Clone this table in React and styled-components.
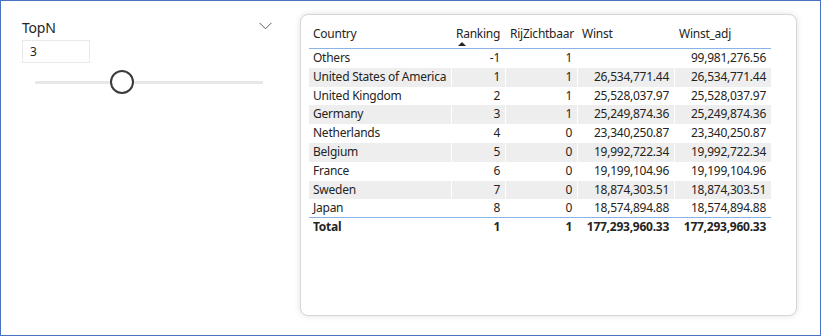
import React from "react";
import styled, { createGlobalStyle } from "styled-components";

const GlobalStyle = createGlobalStyle`
  html, body { margin: 0; padding: 0; background: #fff; }
  body { font-family: "Noto Sans", "Open Sans", sans-serif; color: #252423; }
`;

const rows = [
  ["Others", "-1", "1", "", "99,981,276.56"],
  ["United States of America", "1", "1", "26,534,771.44", "26,534,771.44"],
  ["United Kingdom", "2", "1", "25,528,037.97", "25,528,037.97"],
  ["Germany", "3", "1", "25,249,874.36", "25,249,874.36"],
  ["Netherlands", "4", "0", "23,340,250.87", "23,340,250.87"],
  ["Belgium", "5", "0", "19,992,722.34", "19,992,722.34"],
  ["France", "6", "0", "19,199,104.96", "19,199,104.96"],
  ["Sweden", "7", "0", "18,874,303.51", "18,874,303.51"],
  ["Japan", "8", "0", "18,574,894.88", "18,574,894.88"],
];

const totals = ["Total", "1", "1", "177,293,960.33", "177,293,960.33"];
const headers = ["Country", "Ranking", "RijZichtbaar", "Winst", "Winst_adj"];
const colWidths = "142px 54px 72px 97px 97px";

// Frame
const Frame = styled.div`
  box-sizing: border-box;
  width: 821px;
  height: 336px;
  border: 1px solid #4a72c4;
  display: flex;
  padding: 13px 23px 19px 0;
`;

// Slicer
const Slicer = styled.div`
  width: 250px;
  padding: 3px 28px 0 21px;
  display: flex;
  flex-direction: column;
`;

const SlicerHead = styled.div`
  display: flex;
  justify-content: space-between;
  align-items: center;
  height: 20px;
`;

const SlicerTitle = styled.div`
  font-size: 14px;
  color: #252423;
  letter-spacing: -0.2px;
`;

const ValueBox = styled.div`
  margin-top: 3px;
  width: 59px;
  height: 21px;
  border: 1px solid #e9e9e9;
  font-size: 12px;
  line-height: 21px;
  padding-left: 7px;
`;

const SliderWrap = styled.div`
  margin: 18px 0 0 13px;
  width: 228px;
  height: 3px;
`;

const Track = styled.div`
  position: relative;
  height: 3px;
  background: #e8e8e8;
`;

const Thumb = styled.div`
  position: absolute;
  top: -11px;
  width: 20px;
  height: 20px;
  margin-left: -11px;
  border: 2px solid #3b3b3b;
  border-radius: 50%;
  background: #fff;
`;

// Table card
const Card = styled.div`
  flex: 1;
  border: 1px solid #d6d6d6;
  border-radius: 8px;
  box-shadow: 0 0 6px rgba(0, 0, 0, 0.12);
  padding: 6px 0 0 8px;
  background: #fff;
`;

const Row = styled.div`
  display: grid;
  width: max-content;
  grid-template-columns: ${colWidths};
  font-size: 12px;
  letter-spacing: -0.25px;
  background: ${(p) => (p.$striped ? "#eeeeee" : "#fff")};
  border-bottom: ${(p) => (p.$line ? "1px solid #8ab4e6" : "none")};
  height: ${(p) => p.$h || "18.8px"};
  box-sizing: border-box;
  font-weight: ${(p) => (p.$bold ? 700 : 400)};
`;

const Cell = styled.div`
  padding: 0 5px 0 4px;
  text-align: ${(p) => (p.$num ? "right" : "left")};
  line-height: 18.8px;
  white-space: nowrap;
  overflow: hidden;
  border-left: ${(p) => (p.$first ? "none" : "1px solid #fff")};
`;

const HeadCell = styled.div`
  position: relative;
  padding: 5px 4px 0;
  line-height: 16px;
  white-space: nowrap;
  border-left: ${(p) => (p.$first ? "none" : "1px solid #fff")};
`;

const SortArrow = styled.span`
  position: absolute;
  left: 6px;
  top: 21px;
  width: 0;
  height: 0;
  border-left: 4px solid transparent;
  border-right: 4px solid transparent;
  border-bottom: 4px solid #252423;
`;

const Chevron = () => (
  <svg width="13" height="8" viewBox="0 0 13 8" style={{ marginTop: -2 }}>
    <path d="M0.5 0.8 L6.5 6.8 L12.5 0.8" fill="none" stroke="#605e5c" strokeWidth="1" />
  </svg>
);

export default function App() {
  const value = 3;
  const min = 0;
  const max = 8;
  const pct = ((value - min) / (max - min)) * 100;
  return (
    <>
      <GlobalStyle />
      <Frame>
        <Slicer>
          <SlicerHead>
            <SlicerTitle>TopN</SlicerTitle>
            <Chevron />
          </SlicerHead>
          <ValueBox>{value}</ValueBox>
          <SliderWrap>
            <Track>
              <Thumb style={{ left: `${pct}%` }} />
            </Track>
          </SliderWrap>
        </Slicer>
        <Card>
          <Row $line $h="28px">
            {headers.map((h, i) => (
              <HeadCell key={h} $first={i === 0}>
                {h}
                {h === "Ranking" && <SortArrow />}
              </HeadCell>
            ))}
          </Row>
          {rows.map((r, ri) => (
            <Row key={r[0]} $striped={ri % 2 === 1} $line={ri === rows.length - 1}>
              {r.map((c, ci) => (
                <Cell key={ci} $num={ci > 0} $first={ci === 0}>
                  {c}
                </Cell>
              ))}
            </Row>
          ))}
          <Row $bold>
            {totals.map((c, ci) => (
              <Cell key={ci} $num={ci > 0} $first={ci === 0}>
                {c}
              </Cell>
            ))}
          </Row>
        </Card>
      </Frame>
    </>
  );
}
